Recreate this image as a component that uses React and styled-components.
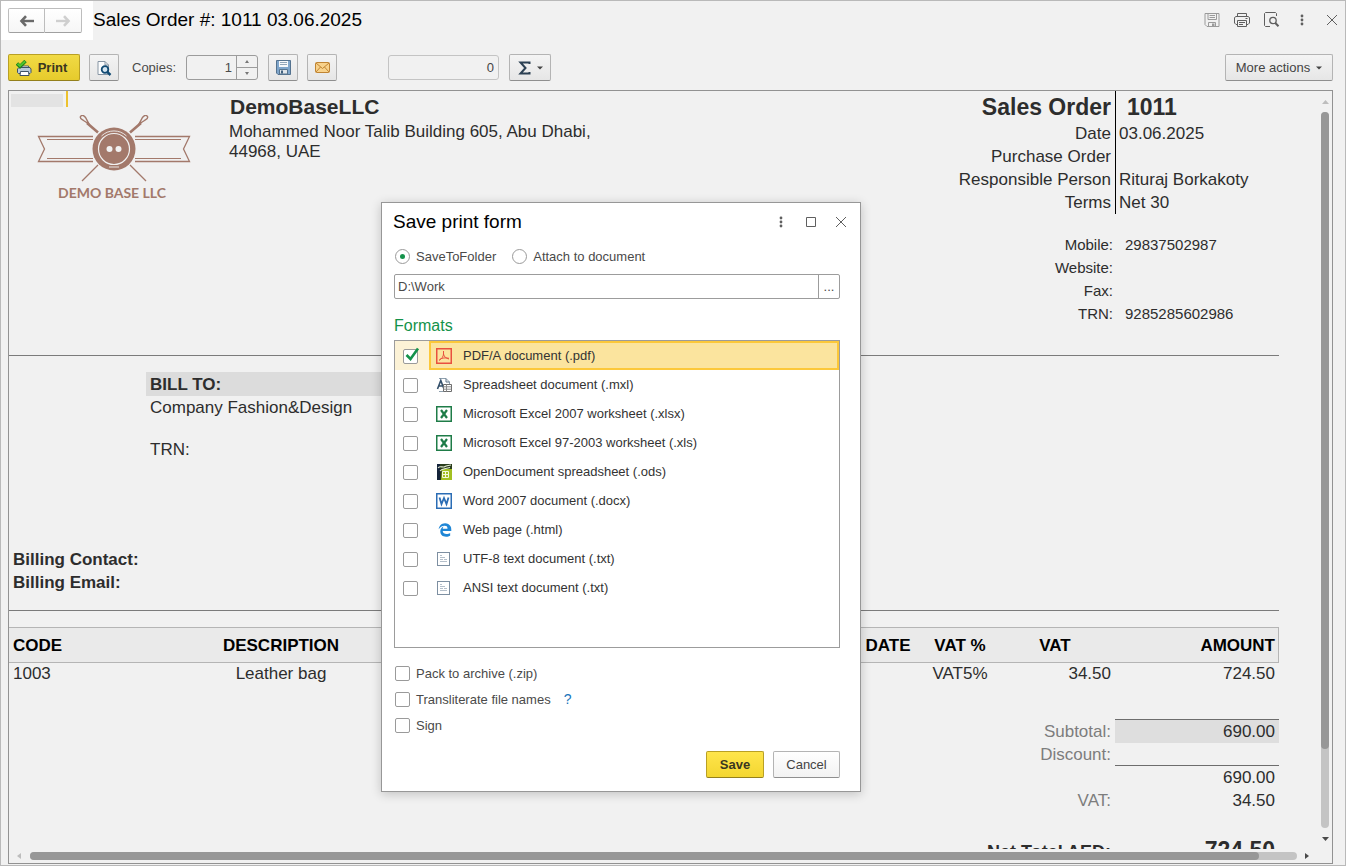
import React, { useState } from "react";
import styled, { createGlobalStyle, css } from "styled-components";
import { FaEdgeLegacy } from "react-icons/fa";

const GlobalStyle = createGlobalStyle`
  *, *::before, *::after { box-sizing: border-box; }
  body {
    margin: 0;
    background: #f1f1f1;
    color: #2d2d2d;
    font-family: "Liberation Sans", Arial, sans-serif;
    font-size: 13px;
  }
  button, input { font: inherit; color: inherit; margin: 0; }
  svg { display: block; }
`;

/* ---------- window ---------- */

const Window = styled.div`
  position: relative;
  display: flex;
  flex-direction: column;
  height: 100vh;
  min-height: 800px;
  border: 1px solid #b9b9b9;
  overflow: hidden;
`;

const TitleBar = styled.header`
  display: flex;
  align-items: flex-start;
  height: 39px;
`;

const NavArea = styled.nav`
  display: flex;
  width: 92px;
  height: 39px;
  padding: 7px;
  background: #fff;
`;

const NavButton = styled.button`
  display: flex;
  align-items: center;
  justify-content: center;
  width: 37px;
  height: 25px;
  padding: 0;
  background: linear-gradient(#fff, #f6f6f6);
  border: 1px solid #bdbdbd;
  border-bottom-color: #a0a0a0;
  border-radius: ${(p) => (p.$side === "left" ? "2px 0 0 2px" : "0 2px 2px 0")};
  ${(p) => p.$side === "right" && css`border-left: 0;`}
  color: ${(p) => (p.$side === "left" ? "#6a6a6a" : "#cfcfcf")};
`;

const PageTitle = styled.h1`
  flex: 1;
  margin: 0;
  font-size: 19px;
  line-height: 38px;
  font-weight: 400;
  color: #000;
`;

const WindowTools = styled.div`
  display: flex;
  margin-right: -2px;
  padding-top: 4px;
`;

const IconButton = styled.button`
  display: flex;
  align-items: center;
  justify-content: center;
  width: 30px;
  height: 30px;
  padding: 0;
  border: 0;
  background: none;
  color: ${(p) => (p.$muted ? "#9a9a9a" : "#5f5f5f")};
`;

/* ---------- toolbar ---------- */

const Toolbar = styled.div`
  display: flex;
  align-items: center;
  gap: 9px;
  padding: 14px 12px 9px 7px;
  color: #4a4a4a;
`;

const Button = styled.button`
  display: flex;
  align-items: center;
  justify-content: center;
  gap: 6px;
  width: ${(p) => (p.$width ? `${p.$width}px` : "auto")};
  height: 27px;
  padding: 0;
  border: 1px solid #b4b4b4;
  border-bottom-color: #8f8f8f;
  border-radius: 2px;
  background: ${(p) => (p.$plain ? "linear-gradient(#fff, #f2f2f2)" : "linear-gradient(#f4f4f4, #e6e6e6)")};
  color: #444;
  ${(p) =>
    p.$primary &&
    css`
      background: ${p.$bright ? "linear-gradient(#ffe54b, #f3d631)" : "linear-gradient(#f1da45, #e6cb2c)"};
      padding-right: ${p.$bright ? 0 : 5}px;
      border-color: #b9a024;
      border-bottom-color: #94801c;
      color: #3a3620;
      font-weight: 700;
    `}
`;

const ToolLabel = styled.label`
  padding: 0 1px 0 4px;
`;

const Spinner = styled.div`
  display: flex;
  width: 72px;
  height: 25px;
  margin-right: 1px;
  border: 1px solid #9c9c9c;
  border-radius: 3px;
`;

const NumberInput = styled.input`
  flex: 1;
  min-width: 0;
  padding: 0 4px;
  border: 0;
  background: none;
  text-align: right;
  outline: 0;
`;

const SpinButtons = styled.div`
  display: flex;
  flex-direction: column;
  width: 21px;
  border-left: 1px solid #9c9c9c;
`;

const SpinButton = styled.button`
  flex: 1;
  display: flex;
  align-items: center;
  justify-content: center;
  padding: 0;
  border: 0;
  background: none;
  & + & { border-top: 1px solid #9c9c9c; }
`;

const SumInput = styled.input`
  width: 111px;
  height: 25px;
  margin: 0 1px 0 42px;
  padding: 0 4px;
  border: 1px solid #c4c4c4;
  border-radius: 3px;
  background: none;
  color: #454545;
  text-align: right;
  outline: 0;
`;

const Spacer = styled.div`
  flex: 1;
`;

/* ---------- sheet ---------- */

const SheetFrame = styled.main`
  flex: 1;
  min-height: 0;
  display: flex;
  flex-direction: column;
  margin: 0 12px 1px 7px;
  border: 1px solid #929292;
`;

const SheetBody = styled.div`
  flex: 1;
  min-height: 0;
  display: flex;
`;

const Viewport = styled.div`
  position: relative;
  flex: 1;
  overflow: hidden;
  padding-right: 41px;
  font-size: 17px;
  line-height: 23px;
`;

const ActiveCell = styled.div`
  position: absolute;
  left: 0;
  top: 0;
  width: 59px;
  height: 16px;
  border-right: 2px solid #edc22f;
  &::before {
    content: "";
    display: block;
    width: 52px;
    height: 13px;
    margin: 3px 0 0 2px;
    background: #e3e3e3;
  }
`;

const VerticalBar = styled.div`
  display: flex;
  flex-direction: column;
  align-items: center;
  width: 12px;
  padding-right: 2px;
`;

const HorizontalBar = styled.div`
  display: flex;
  align-items: center;
  height: 14px;
  padding-right: 14px;
`;

const ArrowCell = styled.span`
  display: flex;
  align-items: center;
  justify-content: center;
  width: ${(p) => (p.$horizontal ? 21 : 12)}px;
  height: ${(p) => (p.$horizontal ? 14 : 21)}px;
  color: ${(p) => (p.$dim ? "#bdbdbd" : "#4a4a4a")};
`;

const Track = styled.div`
  flex: 1;
  display: flex;
  width: 8px;
  height: 8px;
  border-radius: 4px;
  background: #c4c4c4;
`;

const Thumb = styled.div`
  width: ${(p) => (p.$horizontal ? "97%" : "8px")};
  height: ${(p) => (p.$horizontal ? "8px" : "89%")};
  border-radius: 4px;
  background: #979797;
`;

const DocHeader = styled.section`
  display: flex;
  height: 265px;
  border-bottom: 1px solid #7b7b7b;
`;

const Logo = styled.div`
  width: 220px;
  padding: 24px 0 0 28px;
`;

const LogoName = styled.div`
  width: 150px;
  font-family: Lato, "Liberation Sans", sans-serif;
  font-size: 14px;
  line-height: 16px;
  font-weight: 700;
  color: #a3796b;
  text-align: center;
`;

const Company = styled.div`
  flex: 1;
`;

const CompanyName = styled.h2`
  margin: 0;
  padding-left: 1px;
  font-size: 21px;
  line-height: 31px;
  font-weight: 700;
`;

const Address = styled.p`
  max-width: 380px;
  margin: 0;
  font-size: 17px;
  line-height: 20px;
`;

const Meta = styled.dl`
  display: grid;
  grid-template-columns: 1fr 164px;
  grid-auto-rows: 23px;
  margin: 0 0 19px;
  ${(p) => p.$head && css`grid-template-rows: 31px;`}
  ${(p) => p.$small && css`font-size: 15px;`}
`;

const MetaLabel = styled.dt`
  padding-right: ${(p) => (p.$near ? 2 : 4)}px;
  text-align: right;
  ${(p) => p.$big && css`font-size: 23px; line-height: 32px; font-weight: 700;`}
`;

const MetaValue = styled.dd`
  margin: 0;
  padding-left: ${(p) => p.$indent || 3}px;
  ${(p) => p.$ruled && css`border-left: 1px solid #000;`}
  ${(p) => p.$big && css`font-size: 23px; line-height: 32px; font-weight: 700;`}
`;

const BillTo = styled.section`
  width: 420px;
  height: 176px;
  margin: 16px 0 0 137px;
`;

const BillTitle = styled.h3`
  margin: 0;
  padding: 1px 4px 0;
  font-size: 17px;
  line-height: 23px;
  background: #dcdcdc;
`;

const BillLine = styled.div`
  padding: 0 4px;
  margin-bottom: 19px;
`;

const Billing = styled.section`
  height: 63px;
  padding-left: 4px;
  border-bottom: 1px solid #7b7b7b;
  font-weight: 700;
`;

const ItemTable = styled.table`
  width: 100%;
  margin-top: 16px;
  table-layout: fixed;
  border-collapse: separate;
  border-spacing: 0;
  th {
    height: 36px;
    padding: 0 4px;
    background: #eaeaea;
    border: solid #b5b5b5;
    border-width: 1px 0;
    color: #000;
  }
  th:last-child { border-right-width: 1px; padding-right: 3px; }
  td { padding: 0 4px; line-height: 21px; }
`;

const Col = styled.col`
  width: ${(p) => (p.$width ? `${p.$width}px` : "auto")};
`;

const Th = styled.th`
  text-align: ${(p) => p.$align || "center"};
`;

const Td = styled.td`
  text-align: ${(p) => p.$align || "center"};
`;

const Totals = styled.table`
  width: 100%;
  margin-top: 35px;
  table-layout: fixed;
  border-collapse: separate;
  border-spacing: 0;
`;

const TotalLabel = styled.th`
  padding: 0 4px 0 0;
  text-align: right;
  font-weight: 400;
  color: #7d7d7d;
  vertical-align: baseline;
  ${(p) => p.$strong && css`font-size: 18px; font-weight: 700; color: #2d2d2d;`}
`;

const TotalValue = styled.td`
  height: 23px;
  padding: 0 4px 0 0;
  text-align: right;
  vertical-align: baseline;
  ${(p) => p.$filled && css`background: #dedede; border-top: 1px solid #6d6d6d;`}
  ${(p) => p.$ruled && css`border-bottom: 1px solid #6d6d6d;`}
  ${(p) => p.$strong && css`font-size: 23px; font-weight: 700;`}
`;

const TotalGap = styled.tr`
  height: 27px;
`;

/* ---------- dialog ---------- */

const Dialog = styled.section`
  position: absolute;
  left: 380px;
  top: 201px;
  width: 480px;
  background: #fff;
  border: 1px solid #979797;
  box-shadow: 0 2px 10px rgba(0, 0, 0, 0.2);
  color: #4a4a4a;
`;

const DialogHead = styled.div`
  display: flex;
  align-items: center;
  height: 38px;
  padding: 0 4px 0 11px;
`;

const DialogTitle = styled.h2`
  flex: 1;
  margin: 0;
  font-size: 19px;
  line-height: 24px;
  font-weight: 400;
  color: #000;
`;

const DialogBody = styled.form`
  padding: 5px 20px 13px 12px;
`;

const RadioRow = styled.div`
  display: flex;
  gap: 16px;
  padding-left: 1px;
`;

const ChoiceLabel = styled.label`
  display: flex;
  align-items: center;
  gap: 6px;
  height: 20px;
`;

const Radio = styled.input`
  appearance: none;
  display: grid;
  place-items: center;
  width: 15px;
  height: 15px;
  border: 1px solid #9a9a9a;
  border-radius: 50%;
  background: #fff;
  &:checked::after {
    content: "";
    width: 5px;
    height: 5px;
    border-radius: 50%;
    background: #14924a;
  }
`;

const PathField = styled.div`
  display: flex;
  height: 25px;
  margin: 8px 0 17px;
  border: 1px solid #9c9c9c;
  border-radius: 2px;
`;

const PathInput = styled.input`
  flex: 1;
  min-width: 0;
  padding: 0 3px;
  border: 0;
  background: none;
  outline: 0;
`;

const BrowseButton = styled.button`
  width: 21px;
  padding: 0;
  border: 0;
  border-left: 1px solid #9c9c9c;
  background: none;
  line-height: 23px;
`;

const SectionTitle = styled.h3`
  margin: 0 0 4px;
  font-size: 16px;
  line-height: 20px;
  font-weight: 400;
  color: #14924a;
`;

const FormatList = styled.ul`
  height: 308px;
  margin: 0 0 15px;
  padding: 0;
  border: 1px solid #9c9c9c;
  list-style: none;
`;

const FormatRow = styled.li`
  display: flex;
  height: 29px;
  background: ${(p) => (p.$selected ? "#fcf2d6" : "none")};
`;

const TickCell = styled.div`
  display: flex;
  align-items: center;
  width: 34px;
  padding: 2px 0 0 8px;
`;

const FormatCell = styled.label`
  flex: 1;
  display: flex;
  align-items: center;
  gap: 11px;
  padding-left: 5px;
  border: 2px solid ${(p) => (p.$selected ? "#fcc83a" : "transparent")};
  background: ${(p) => (p.$selected ? "#fbe49e" : "none")};
  color: #333;
`;

const TickBox = styled.span`
  position: relative;
  display: flex;
`;

const TickInput = styled.input`
  appearance: none;
  width: 15px;
  height: 15px;
  border: 1px solid #9a9a9a;
  border-radius: 2px;
  background: #fff;
`;

const TickMark = styled.svg`
  position: absolute;
  left: 2px;
  top: -2px;
  pointer-events: none;
`;

const Options = styled.div`
  display: flex;
  flex-direction: column;
  gap: 6px;
  padding-left: 1px;
`;

const OptionRow = styled.div`
  display: flex;
  align-items: center;
  gap: 13px;
`;

const HelpLink = styled.a`
  color: #1b75bb;
  font-size: 14px;
  text-decoration: none;
`;

const DialogActions = styled.div`
  display: flex;
  justify-content: flex-end;
  gap: 9px;
  margin-top: 16px;
`;

/* ---------- icons ---------- */

const Arrow = ({ flip }) => (
  <svg width="16" height="12" viewBox="0 0 16 12" fill="none" stroke="currentColor">
    <g transform={flip ? "translate(16 0) scale(-1 1)" : undefined}>
      <path d="M2 6H15" strokeWidth="2.400" />
      <path d="M7 1.200L2.500 6L7 10.800" strokeWidth="2.600" />
    </g>
  </svg>
);

const Triangle = ({ dir }) => {
  const d = {
    up: "M0 5L3.5 1L7 5Z",
    down: "M0 1L3.5 5L7 1Z",
    left: "M5 0L1 3L5 6Z",
    right: "M1 0L5 3L1 6Z",
  }[dir];
  return (
    <svg width="7" height="6" viewBox="0 0 7 6" fill="currentColor">
      <path d={d} />
    </svg>
  );
};

const Caret = () => (
  <svg width="6" height="4" viewBox="0 0 6 4" fill="#444">
    <path d="M0 0.5H6L3 3.5Z" />
  </svg>
);

const SmallCaret = ({ up }) => (
  <svg width="4" height="3" viewBox="0 0 4 3" fill="#777">
    <path d={up ? "M0 3L2 0L4 3Z" : "M0 0L2 3L4 0Z"} />
  </svg>
);

const DiskOutline = () => (
  <svg width="16" height="16" viewBox="0 0 16 16" fill="none" stroke="currentColor">
    <path d="M1 1.5H15V14.5H3L1 12.5Z" />
    <path d="M4 1.5V7.5H12.5V1.5M5.5 3.5H11M5.5 5.5H11M4.5 14.5V10.5H11.5V14.5" />
    <path d="M8 11.5H10.5V14H8Z" fill="currentColor" stroke="none" />
  </svg>
);

const PrinterOutline = () => (
  <svg width="16" height="16" viewBox="0 0 16 16" fill="none" stroke="currentColor">
    <path d="M3.5 4V1.5H12.5V4M3.5 12.5H2L0.5 11V5.5L2 4.5H14L15.5 5.5V11L14 12.5H12.5" />
    <path d="M3.5 8.5H12.5V14.5H3.5ZM5 10.5H11M5 12.5H9M11.5 6.5H13.5" />
  </svg>
);

const PreviewOutline = () => (
  <svg width="16" height="16" viewBox="0 0 16 16" fill="none" stroke="currentColor">
    <path d="M6 14.5H1.5L0.5 13.5V1.5L1.5 0.5H11.5L12.5 1.5V4" />
    <circle cx="9" cy="8.5" r="3.2" strokeWidth="1.3" />
    <path d="M11.3 11L14.5 14.2" strokeWidth="2" />
  </svg>
);

const Dots = () => (
  <svg width="4" height="12" viewBox="0 0 4 12" fill="currentColor">
    <circle cx="2" cy="2" r="1.4" />
    <circle cx="2" cy="6" r="1.4" />
    <circle cx="2" cy="10" r="1.4" />
  </svg>
);

const Cross = () => (
  <svg width="12" height="12" viewBox="0 0 12 12" stroke="currentColor">
    <path d="M1 1L11 11M11 1L1 11" />
  </svg>
);

const Square = () => (
  <svg width="10" height="10" viewBox="0 0 10 10" fill="none" stroke="currentColor">
    <path d="M0.5 0.5H9.5V9.5H0.5Z" />
  </svg>
);

const PrintIcon = () => (
  <svg width="16" height="16" viewBox="0 0 16 16" fill="none">
    <path d="M4.5 6H12.5V9H4.5Z" fill="#fff" stroke="#4d5d6c" />
    <path d="M1.5 9L3 7.5H14L15 9V12.5L14 13.5H2.5L1.5 12.5Z" fill="#b9cbd9" stroke="#3f5265" />
    <path d="M4.5 11.5H12.5L13 15.5H4Z" fill="#fff" stroke="#3f5265" />
    <path d="M1 3.5L4 6.5L9.5 1" stroke="#1c7a1c" strokeWidth="3.4" />
    <path d="M1.5 3.7L4 6L9.2 1.2" stroke="#4fc62c" strokeWidth="2" />
  </svg>
);

const PreviewIcon = () => (
  <svg width="16" height="16" viewBox="0 0 16 16" fill="none">
    <path d="M2 1.5H9L12.5 5V14.5H2Z" fill="#fbfcfd" stroke="#8896a4" />
    <path d="M9 1.5V5H12.5" stroke="#8896a4" />
    <circle cx="9" cy="9.5" r="3.3" fill="#d5e6f2" stroke="#114a73" strokeWidth="1.8" />
    <path d="M11.3 12L14.5 15" stroke="#114a73" strokeWidth="2.4" />
  </svg>
);

const DiskIcon = () => (
  <svg width="15" height="15" viewBox="0 0 15 15" fill="none">
    <path d="M0.5 0.5H14.5V14.5H2L0.5 13Z" fill="#7ea5cb" stroke="#54728f" />
    <path d="M3 1H12V7H3Z" fill="#f5f8fb" />
    <path d="M4 2.5H11M4 4.5H11" stroke="#91a6ba" />
    <path d="M3.5 9.5H11.5V14H3.5Z" fill="#dfe5ea" stroke="#56748f" />
    <path d="M5 10.5H7V13.5H5Z" fill="#41617f" />
  </svg>
);

const MailIcon = () => (
  <svg width="15" height="11" viewBox="0 0 15 11" fill="none" stroke="#c08432">
    <rect x="0.5" y="0.5" width="14" height="10" rx="1" fill="#f8d28b" />
    <path d="M1 1L7.5 6.5L14 1M1 10L5.5 5M14 10L9.5 5" />
  </svg>
);

const SigmaIcon = () => (
  <svg width="13" height="14" viewBox="0 0 13 14" fill="none" stroke="#2c4053" strokeWidth="2">
    <path d="M11.5 3V1.5H2.5L7.5 7L2.5 12.5H11.5V11" />
  </svg>
);

const PdfIcon = () => (
  <svg width="16" height="16" viewBox="0 0 16 16" fill="none" stroke="#e9503f">
    <rect x="0.75" y="0.75" width="14.5" height="14.5" strokeWidth="1.5" />
    <path d="M7.5 3V6C7.5 8.5 5.5 11 3 12.5M7.5 6C8 9 10.5 10.5 13 11M3.5 11.5C6 9.8 9.5 9.5 13 10.3" />
  </svg>
);

const MxlIcon = () => (
  <svg width="16" height="16" viewBox="0 0 16 16" fill="none">
    <path d="M3 1.5H10L13.5 5V14.5H3" stroke="#8fa0ae" />
    <path d="M10 1.5V5H13.5" stroke="#5d7386" />
    <path d="M1.5 12L4.8 3.5L8 12M2.5 9H7" stroke="#34506b" strokeWidth="1.6" />
    <path d="M7.5 7.5H15.5V14.5H7.5Z" fill="#fff" stroke="#6d6d6d" />
    <path d="M7.5 9.8H15.5M7.5 12.2H15.5M10.5 7.5V14.5" stroke="#8a8a8a" />
  </svg>
);

const ExcelIcon = () => (
  <svg width="16" height="16" viewBox="0 0 16 16" fill="none" stroke="#1f7c48">
    <rect x="0.75" y="0.75" width="14.5" height="14.5" strokeWidth="1.5" />
    <path d="M5 4L11 12M11 4L5 12" strokeWidth="2.2" />
  </svg>
);

const OdsIcon = () => (
  <svg width="16" height="16" viewBox="0 0 16 16" fill="none">
    <path d="M1 0H16V16H1Z" fill="#2a3d1c" />
    <path d="M6 5H16V16H5Z" fill="#a3c021" />
    <path d="M1 0H4V16H1Z" fill="#14233a" />
    <path d="M2 4C4 1.500 6 3.500 8 3C10 1.500 12 1.500 15 1M4 7C6 4.500 9 5 14 3.500" stroke="#e8efd8" strokeWidth="1.1" />
    <path d="M6.5 7.5H12.5V13.5H6.500ZM6.5 10.5H12.5M9.5 7.5V13.5" stroke="#f4f8dc" />
  </svg>
);

const WordIcon = () => (
  <svg width="16" height="16" viewBox="0 0 16 16" fill="none" stroke="#2b6db5">
    <rect x="0.75" y="0.75" width="14.5" height="14.5" strokeWidth="1.5" />
    <path d="M3.5 4.5L5.5 11L8 5L10.5 11L12.5 4.5" strokeWidth="1.8" />
  </svg>
);

const TextIcon = () => (
  <svg width="16" height="16" viewBox="0 0 16 16" fill="none">
    <rect x="1.5" y="1.5" width="12" height="13" fill="#fff" stroke="#7d8fa1" />
    <path d="M4 4.5H6M4 6.5H9M4 8.5H7M4 10.5H11M8 8.5H11" stroke="#b4bfca" />
  </svg>
);

const EdgeIcon = () => (
  <svg width="16" height="16" viewBox="0 0 16 16">
    <FaEdgeLegacy x="2" y="1" size={14} color="#1f86d6" />
  </svg>
);

const LogoMark = () => (
  <svg width="154" height="70" viewBox="0 0 154 70" fill="none" stroke="#a3796b">
    <path d="M56 21.5H1.5L7.5 34L1.5 46.5H56M98 21.5H152.5L146.5 34L152.5 46.5H98" strokeWidth="1.3" />
    <path d="M10 24.5H56M10 43.5H56M98 24.5H144M98 43.5H144" />
    <path d="M50 8L61 17.5M104 8L93 17.5" strokeWidth="2.6" />
    <path d="M43.5 1.5C45 -0.500 47 0.500 48.5 2.500L52 9L46.5 5.500C44 4 42.5 3.500 43.5 1.500ZM110.500 1.500C109 -0.500 107 0.500 105.500 2.500L102 9L107.500 5.500C110 4 111.500 3.500 110.500 1.500Z" strokeWidth="1.4" />
    <path d="M61 50L45 66M93 50L109 66" strokeWidth="1.3" />
    <circle cx="77" cy="34" r="21.5" fill="#a3796b" stroke="none" />
    <circle cx="77" cy="34" r="15.5" stroke="#f1f1f1" strokeWidth="1.2" />
    <path d="M64.5 21A18 18 0 0 1 89.5 21" stroke="#f1f1f1" strokeWidth="0.9" />
    <path d="M72 52H82" stroke="#f1f1f1" strokeWidth="0.9" />
    <circle cx="72.5" cy="34" r="3" fill="#f1f1f1" stroke="none" />
    <circle cx="81.5" cy="34" r="3" fill="#f1f1f1" stroke="none" />
  </svg>
);

/* ---------- data ---------- */

const FORMATS = [
  ["pdf", "PDF/A document (.pdf)", PdfIcon],
  ["mxl", "Spreadsheet document (.mxl)", MxlIcon],
  ["xlsx", "Microsoft Excel 2007 worksheet (.xlsx)", ExcelIcon],
  ["xls", "Microsoft Excel 97-2003 worksheet (.xls)", ExcelIcon],
  ["ods", "OpenDocument spreadsheet (.ods)", OdsIcon],
  ["docx", "Word 2007 document (.docx)", WordIcon],
  ["html", "Web page (.html)", EdgeIcon],
  ["utf8", "UTF-8 text document (.txt)", TextIcon],
  ["ansi", "ANSI text document (.txt)", TextIcon],
];

const ORDER = [
  ["Date", "03.06.2025"],
  ["Purchase Order", ""],
  ["Responsible Person", "Rituraj Borkakoty"],
  ["Terms", "Net 30"],
];

const CONTACTS = [
  ["Mobile:", "29837502987"],
  ["Website:", ""],
  ["Fax:", ""],
  ["TRN:", "9285285602986"],
];

const OPTIONS = [
  ["zip", "Pack to archive (.zip)"],
  ["translit", "Transliterate file names"],
  ["sign", "Sign"],
];

/* ---------- parts ---------- */

function Tick({ id, checked, onChange }) {
  return (
    <TickBox>
      <TickInput type="checkbox" id={id} checked={checked} onChange={onChange} />
      {checked && (
        <TickMark width="15" height="15" viewBox="0 0 15 15" fill="none" stroke="#14924a" strokeWidth="2.6">
          <path d="M1.5 8L5.5 12L13 1.5" />
        </TickMark>
      )}
    </TickBox>
  );
}

function SaveDialog() {
  const [checked, setChecked] = useState({ pdf: true });
  const [target, setTarget] = useState("folder");
  const toggle = (key) => () => setChecked((c) => ({ ...c, [key]: !c[key] }));

  return (
    <Dialog role="dialog" aria-labelledby="dialog-title">
      <DialogHead>
        <DialogTitle id="dialog-title">Save print form</DialogTitle>
        <IconButton aria-label="Menu"><Dots /></IconButton>
        <IconButton aria-label="Maximize"><Square /></IconButton>
        <IconButton aria-label="Close"><Cross /></IconButton>
      </DialogHead>
      <DialogBody onSubmit={(e) => e.preventDefault()}>
        <RadioRow>
          <ChoiceLabel>
            <Radio type="radio" name="target" checked={target === "folder"} onChange={() => setTarget("folder")} />
            SaveToFolder
          </ChoiceLabel>
          <ChoiceLabel>
            <Radio type="radio" name="target" checked={target === "doc"} onChange={() => setTarget("doc")} />
            Attach to document
          </ChoiceLabel>
        </RadioRow>
        <PathField>
          <PathInput aria-label="Folder" defaultValue="D:\Work" />
          <BrowseButton type="button" aria-label="Browse">...</BrowseButton>
        </PathField>
        <SectionTitle>Formats</SectionTitle>
        <FormatList>
          {FORMATS.map(([key, label, Icon], i) => (
            <FormatRow key={key} $selected={i === 0}>
              <TickCell>
                <Tick id={key} checked={!!checked[key]} onChange={toggle(key)} />
              </TickCell>
              <FormatCell htmlFor={key} $selected={i === 0}>
                <Icon />
                {label}
              </FormatCell>
            </FormatRow>
          ))}
        </FormatList>
        <Options>
          {OPTIONS.map(([key, label]) => (
            <OptionRow key={key}>
              <ChoiceLabel htmlFor={key}>
                <Tick id={key} checked={!!checked[key]} onChange={toggle(key)} />
                {label}
              </ChoiceLabel>
              {key === "translit" && <HelpLink href="#help">?</HelpLink>}
            </OptionRow>
          ))}
        </Options>
        <DialogActions>
          <Button $primary $bright $width={58} type="submit">Save</Button>
          <Button $plain $width={67} type="button">Cancel</Button>
        </DialogActions>
      </DialogBody>
    </Dialog>
  );
}

function OrderSheet() {
  return (
    <Viewport>
      <DocHeader>
        <Logo>
          <LogoMark />
          <LogoName>DEMO BASE LLC</LogoName>
        </Logo>
        <Company>
          <CompanyName>DemoBaseLLC</CompanyName>
          <Address>Mohammed Noor Talib Building 605, Abu Dhabi, 44968, UAE</Address>
        </Company>
        <div>
          <Meta $head>
            <MetaLabel $big>Sales Order</MetaLabel>
            <MetaValue $big $ruled $indent={11}>1011</MetaValue>
            {ORDER.map(([label, value]) => (
              <React.Fragment key={label}>
                <MetaLabel>{label}</MetaLabel>
                <MetaValue $ruled>{value}</MetaValue>
              </React.Fragment>
            ))}
          </Meta>
          <Meta $small>
            {CONTACTS.map(([label, value]) => (
              <React.Fragment key={label}>
                <MetaLabel $near>{label}</MetaLabel>
                <MetaValue $indent={10}>{value}</MetaValue>
              </React.Fragment>
            ))}
          </Meta>
        </div>
      </DocHeader>
      <BillTo>
        <BillTitle>BILL TO:</BillTitle>
        <BillLine>Company Fashion&amp;Design</BillLine>
        <BillLine>TRN:</BillLine>
      </BillTo>
      <Billing>
        <div>Billing Contact:</div>
        <div>Billing Email:</div>
      </Billing>
      <ItemTable>
        <colgroup>
          <Col $width={109} />
          <Col $width={326} />
          <Col />
          <Col $width={74} />
          <Col $width={70} />
          <Col $width={120} />
          <Col $width={164} />
        </colgroup>
        <thead>
          <tr>
            <Th $align="left">CODE</Th>
            <Th>DESCRIPTION</Th>
            <Th />
            <Th>DATE</Th>
            <Th>VAT %</Th>
            <Th>VAT</Th>
            <Th $align="right">AMOUNT</Th>
          </tr>
        </thead>
        <tbody>
          <tr>
            <Td $align="left">1003</Td>
            <Td>Leather bag</Td>
            <Td />
            <Td />
            <Td>VAT5%</Td>
            <Td $align="right">34.50</Td>
            <Td $align="right">724.50</Td>
          </tr>
        </tbody>
      </ItemTable>
      <Totals>
        <colgroup>
          <Col />
          <Col $width={164} />
        </colgroup>
        <tbody>
          <tr><TotalLabel>Subtotal:</TotalLabel><TotalValue $filled>690.00</TotalValue></tr>
          <tr><TotalLabel>Discount:</TotalLabel><TotalValue $ruled /></tr>
          <tr><TotalLabel /><TotalValue>690.00</TotalValue></tr>
          <tr><TotalLabel>VAT:</TotalLabel><TotalValue>34.50</TotalValue></tr>
          <TotalGap><td /><td /></TotalGap>
          <tr><TotalLabel $strong>Net Total AED:</TotalLabel><TotalValue $strong>724.50</TotalValue></tr>
        </tbody>
      </Totals>
      <ActiveCell />
    </Viewport>
  );
}

export default function App() {
  return (
    <Window>
      <GlobalStyle />
      <TitleBar>
        <NavArea>
          <NavButton $side="left" aria-label="Back"><Arrow /></NavButton>
          <NavButton $side="right" aria-label="Forward"><Arrow flip /></NavButton>
        </NavArea>
        <PageTitle>Sales Order #: 1011 03.06.2025</PageTitle>
        <WindowTools>
          <IconButton $muted aria-label="Save"><DiskOutline /></IconButton>
          <IconButton aria-label="Print"><PrinterOutline /></IconButton>
          <IconButton aria-label="Preview"><PreviewOutline /></IconButton>
          <IconButton aria-label="Menu"><Dots /></IconButton>
          <IconButton aria-label="Close"><Cross /></IconButton>
        </WindowTools>
      </TitleBar>
      <Toolbar>
        <Button $primary $width={72}><PrintIcon />Print</Button>
        <Button $width={30} aria-label="Preview"><PreviewIcon /></Button>
        <ToolLabel htmlFor="copies">Copies:</ToolLabel>
        <Spinner>
          <NumberInput id="copies" defaultValue="1" />
          <SpinButtons>
            <SpinButton aria-label="More"><SmallCaret up /></SpinButton>
            <SpinButton aria-label="Fewer"><SmallCaret /></SpinButton>
          </SpinButtons>
        </Spinner>
        <Button $width={30} aria-label="Save"><DiskIcon /></Button>
        <Button $width={30} aria-label="Send by email"><MailIcon /></Button>
        <SumInput aria-label="Sum" defaultValue="0" />
        <Button $width={42} aria-label="Totals"><SigmaIcon /><Caret /></Button>
        <Spacer />
        <Button $width={108}>More actions<Caret /></Button>
      </Toolbar>
      <SheetFrame>
        <SheetBody>
          <OrderSheet />
          <VerticalBar>
            <ArrowCell $dim><Triangle dir="up" /></ArrowCell>
            <Track><Thumb /></Track>
            <ArrowCell><Triangle dir="down" /></ArrowCell>
          </VerticalBar>
        </SheetBody>
        <HorizontalBar>
          <ArrowCell $horizontal $dim><Triangle dir="left" /></ArrowCell>
          <Track><Thumb $horizontal /></Track>
          <ArrowCell $horizontal><Triangle dir="right" /></ArrowCell>
        </HorizontalBar>
      </SheetFrame>
      <SaveDialog />
    </Window>
  );
}
